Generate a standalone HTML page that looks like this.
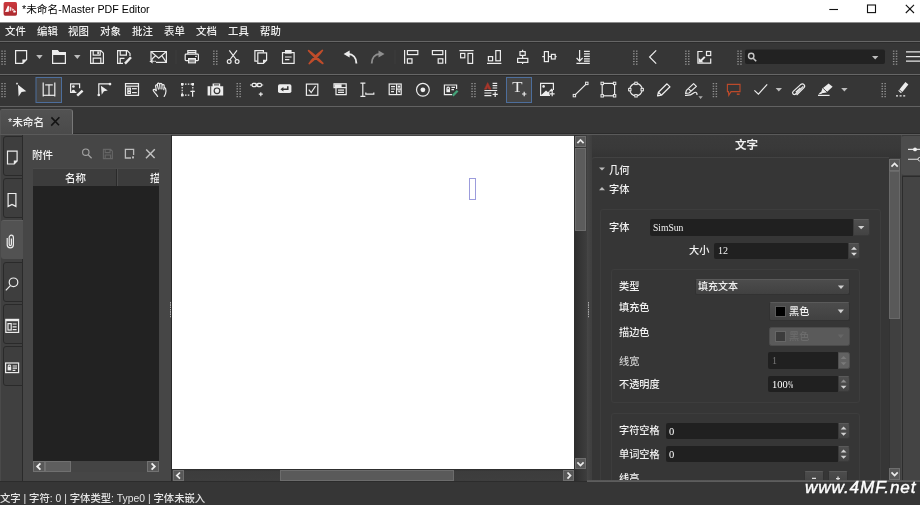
<!DOCTYPE html>
<html lang="zh-CN">
<head>
<meta charset="utf-8">
<title>*未命名-Master PDF Editor</title>
<style>
*{box-sizing:border-box;margin:0;padding:0}
html,body{width:920px;height:505px;overflow:hidden;background:#363636}
body{position:relative;font-family:"Liberation Sans","Noto Sans CJK SC",sans-serif;font-size:11px;color:#f2f2f2;font-weight:500}
.a{position:absolute}
.t{position:absolute;white-space:nowrap;line-height:14px;height:14px;will-change:transform}
svg{position:absolute;left:0;top:0;overflow:visible}
.ic{fill:none;stroke:#ececec;stroke-width:1.2}
.f{fill:#ececec;stroke:none}
.grip{position:absolute;width:5.8px;height:15.6px;background-image:radial-gradient(ellipse 0.95px 0.7px at 1.4px 1.3px,#a8a8a8 60%,transparent 100%);background-size:2.9px 2.6px}
.sbtn{position:absolute;left:3px;width:20px;height:40px;background:#3e3e3e;border:1px solid #2a2a2a;border-radius:3px 0 0 3px}
.fld{position:absolute;background:#202020;border-radius:2px}
.cmb{position:absolute;background:linear-gradient(#4c4c4c,#414141);border:1px solid #323232;border-top-color:#5a5a5a;border-radius:2.5px}
.spn{position:absolute;background:linear-gradient(#4f4f4f,#434343);border:1px solid #3a3a3a;border-top-color:#5a5a5a;border-radius:0 2.5px 2.5px 0}
.pl{font-size:10.2px}
.scb{position:absolute;background:#555;border:1px solid #333}
</style>
</head>
<body>

<div class="a" style="left:0;top:0;width:920px;height:22px;background:#fff"></div>
<div class="t" style="left:21.7px;top:1.2px;font-size:10.7px;font-weight:400;color:#000;line-height:16px;height:16px">*未命名-Master PDF Editor</div>
<div class="a" style="left:0;top:22px;width:920px;height:20px;background:#363636;border-top:1px solid #8c8c8c"></div>
<div class="t" style="left:4.6px;top:24.8px;font-size:10.4px;color:#f0f0f0">文件</div>
<div class="t" style="left:36.5px;top:24.8px;font-size:10.4px;color:#f0f0f0">编辑</div>
<div class="t" style="left:68.4px;top:24.8px;font-size:10.4px;color:#f0f0f0">视图</div>
<div class="t" style="left:100.3px;top:24.8px;font-size:10.4px;color:#f0f0f0">对象</div>
<div class="t" style="left:132.2px;top:24.8px;font-size:10.4px;color:#f0f0f0">批注</div>
<div class="t" style="left:164.1px;top:24.8px;font-size:10.4px;color:#f0f0f0">表单</div>
<div class="t" style="left:196.0px;top:24.8px;font-size:10.4px;color:#f0f0f0">文档</div>
<div class="t" style="left:227.9px;top:24.8px;font-size:10.4px;color:#f0f0f0">工具</div>
<div class="t" style="left:259.8px;top:24.8px;font-size:10.4px;color:#f0f0f0">帮助</div>
<div class="a" style="left:0;top:41px;width:920px;height:33px;background:#363636;border-top:1px solid #666;box-shadow:inset 0 1px 0 #2c2c2c"></div>
<div class="a" style="left:0;top:74px;width:920px;height:33px;background:#363636;border-top:1px solid #666;box-shadow:inset 0 1px 0 #2c2c2c;border-bottom:1px solid #626262"></div>
<div class="a" style="left:0;top:107px;width:920px;height:28px;background:#363636;border-bottom:1px solid #5a5a5a;box-shadow:inset 0 -1px 0 #2b2b2b"></div>
<div class="a" style="left:0;top:109px;width:73.4px;height:25px;background:linear-gradient(#525252,#4a4a4a);border:1px solid #5e5e5e;border-left-color:#555;border-right-color:#787878;border-bottom:none;border-radius:2px 3px 0 0"></div>
<div class="t" style="left:8px;top:115px;font-size:10.7px;color:#eee">*未命名</div>
<div class="a" style="left:0;top:135px;width:920px;height:346px;background:#464646"></div>
<div class="a" style="left:0;top:135px;width:23px;height:346px;background:#404040;border-right:1px solid #2a2a2a;border-left:1.5px solid #4a4a4a"></div>
<div class="sbtn" style="top:136px"></div>
<div class="sbtn" style="top:178px"></div>
<div class="a" style="left:1.2px;top:220px;width:21.6px;height:39.4px;background:#525252;border-top:1px solid #5e5e5e;border-radius:3px 0 0 3px"></div>
<div class="sbtn" style="top:262px"></div>
<div class="sbtn" style="top:304px"></div>
<div class="sbtn" style="top:346px"></div>
<div class="t pl" style="left:32.4px;top:148px;font-size:10.5px">附件</div>
<div class="a" style="left:33px;top:168px;width:126px;height:303.5px;background:#222"></div>
<div class="a" style="left:33px;top:168px;width:126px;height:17.5px;background:#3c3c3c;border-top:1px solid #4a4a4a"></div>
<div class="a" style="left:116px;top:169px;width:1px;height:17px;background:#2a2a2a"></div>
<div class="a" style="left:117px;top:169px;width:1px;height:17px;background:#4c4c4c"></div>
<div class="t pl" style="left:64.8px;top:170.5px;font-size:10.5px">名称</div>
<div class="a" style="left:149.6px;top:169px;width:9.4px;height:17px;overflow:hidden"><div class="t" style="left:0;top:1.5px;font-size:10.5px">描述</div></div>
<div class="a" style="left:33.3px;top:461px;width:125.7px;height:11px;background:#444"></div>
<div class="a" style="left:33.3px;top:461px;width:11.7px;height:11px;background:#585858;border:1px solid #727272"></div>
<div class="a" style="left:45.4px;top:461px;width:25.6px;height:11px;background:#5e5e5e;border:1px solid #707070"></div>
<div class="a" style="left:147px;top:461px;width:12px;height:11px;background:#585858;border:1px solid #727272"></div>
<div class="a" style="left:170px;top:302px;width:1.4px;height:16px;background-image:linear-gradient(#b0b0b0 50%,transparent 50%);background-size:1.4px 2.3px"></div>
<div class="a" style="left:172px;top:135.6px;width:402.3px;height:333.4px;background:#fff"></div>
<div class="a" style="left:170.9px;top:135px;width:1.4px;height:346px;background:#2a2a2a"></div>
<div class="a" style="left:469px;top:178px;width:7px;height:22px;border:1px solid #9c9cdc"></div>
<div class="a" style="left:574px;top:135px;width:13px;height:346px;background:linear-gradient(to right,#2d2d2d,#3e3e3e)"></div>
<div class="a" style="left:575px;top:136px;width:11px;height:11px;background:#585858;border:1px solid #6e6e6e"></div>
<div class="a" style="left:575px;top:147.5px;width:11px;height:83.5px;background:#5c5c5c;border:1px solid #6c6c6c"></div>
<div class="a" style="left:575px;top:458px;width:11px;height:11px;background:#585858;border:1px solid #6e6e6e"></div>
<div class="a" style="left:172px;top:469px;width:402px;height:12px;background:linear-gradient(#2a2a2a 0,#3c3c3c 2px,#3e3e3e)"></div>
<div class="a" style="left:173px;top:470px;width:11px;height:11px;background:#585858;border:1px solid #6e6e6e"></div>
<div class="a" style="left:280px;top:470px;width:173.5px;height:11px;background:#5a5a5a;border:1px solid #6c6c6c"></div>
<div class="a" style="left:563px;top:470px;width:11px;height:11px;background:#585858;border:1px solid #6e6e6e"></div>
<div class="a" style="left:587px;top:135px;width:5px;height:346px;background:linear-gradient(to right,#464646,#3e3e3e)"></div>
<div class="a" style="left:588px;top:302px;width:1.4px;height:16px;background-image:linear-gradient(#a8a8a8 50%,transparent 50%);background-size:1.4px 2.3px"></div>
<div class="a" style="left:592px;top:135px;width:310px;height:24px;background:linear-gradient(#3b3b3b 0,#393939 55%,#333 100%)"></div>
<div class="t" style="left:735px;top:138px;font-size:11.5px;font-weight:bold;color:#eee">文字</div>
<div class="a" style="left:591px;top:157px;width:298px;height:324px;background:#363636;border-top:1px solid #424242;border-left:1px solid #404040;border-radius:4px 0 0 0"></div>
<div class="a" style="left:888.5px;top:158px;width:12px;height:323px;background:#404040;border-left:1px solid #333"></div>
<div class="a" style="left:889px;top:158.6px;width:11.2px;height:12px;background:#585858;border:1px solid #6e6e6e"></div>
<div class="a" style="left:889px;top:171px;width:11.2px;height:148px;background:#595959;border:1px solid #696969"></div>
<div class="a" style="left:889px;top:468px;width:11.2px;height:11.6px;background:#585858;border:1px solid #6e6e6e"></div>
<div class="a" style="left:900.5px;top:135px;width:19.5px;height:346px;background:#3a3a3a;border-left:1px solid #484848"></div>
<div class="a" style="left:901px;top:135.5px;width:19px;height:39px;background:#4c4c4c;border-radius:3px 0 0 3px"></div>
<div class="a" style="left:902px;top:176px;width:18px;height:305px;background:#444;border:1.5px solid #2c2c2c;border-right:none"></div>
<div class="t pl" style="left:609.1px;top:164px">几何</div>
<div class="t pl" style="left:609.1px;top:183px">字体</div>
<div class="a" style="left:600px;top:209px;width:281px;height:280px;border:1px solid #3d3d3d;border-radius:3px"></div>
<div class="t pl" style="left:609.1px;top:220.7px">字体</div>
<div class="fld" style="left:650px;top:219px;width:204px;height:17px"></div>
<div class="t" style="left:653px;top:221px;font-family:'Liberation Serif',serif;font-size:9.6px">SimSun</div>
<div class="spn" style="left:853.4px;top:218.7px;width:17px;height:17.2px"></div>
<div class="t pl" style="left:688.6px;top:244px">大小</div>
<div class="fld" style="left:714px;top:243px;width:135px;height:16px"></div>
<div class="t" style="left:718px;top:244px;font-family:'Liberation Serif',serif;font-size:10px">12</div>
<div class="spn" style="left:848.3px;top:243px;width:11.6px;height:16.3px"></div>
<div class="a" style="left:611px;top:269px;width:249px;height:134px;border:1px solid #3d3d3d;border-radius:3px"></div>
<div class="t pl" style="left:619.4px;top:280.4px">类型</div>
<div class="cmb" style="left:695px;top:278.7px;width:154.6px;height:16.6px"></div>
<div class="t pl" style="left:698px;top:280px;font-size:10px">填充文本</div>
<div class="t pl" style="left:619.4px;top:301px">填充色</div>
<div class="cmb" style="left:769px;top:301.7px;width:80.6px;height:19.2px"></div>
<div class="a" style="left:775px;top:306px;width:11px;height:11px;background:#000;border:1px solid #5a5a5a"></div>
<div class="t pl" style="left:788.6px;top:305px">黑色</div>
<div class="t pl" style="left:619.4px;top:325.7px">描边色</div>
<div class="cmb" style="left:769px;top:326.9px;width:80.6px;height:19.3px;background:#5a5a5a;border-color:#4c4c4c"></div>
<div class="a" style="left:775px;top:331px;width:11px;height:11px;background:#3c3c3c;border:1px solid #666"></div>
<div class="t pl" style="left:788.6px;top:330px;color:#6c6c6c">黑色</div>
<div class="t pl" style="left:619.4px;top:354.8px;color:#ccc">线宽</div>
<div class="fld" style="left:768px;top:352px;width:71px;height:17px"></div>
<div class="t" style="left:772px;top:354px;font-size:10px;color:#777;font-family:'Liberation Serif',serif">1</div>
<div class="spn" style="left:838px;top:352px;width:12px;height:17px;background:#626262;border-color:#505050"></div>
<div class="t pl" style="left:619.4px;top:378.4px">不透明度</div>
<div class="fld" style="left:768px;top:376px;width:71px;height:16px"></div>
<div class="t" style="left:772.3px;top:378.2px;font-family:'Liberation Serif',serif;font-size:10.5px;font-weight:400;color:#fff">100<span style="display:inline-block;transform:scaleX(0.6);transform-origin:0 50%">%</span></div>
<div class="spn" style="left:838px;top:376px;width:12px;height:16px"></div>
<div class="a" style="left:611px;top:413px;width:249px;height:80px;border:1px solid #3d3d3d;border-radius:3px"></div>
<div class="t pl" style="left:619.4px;top:424.4px">字符空格</div>
<div class="fld" style="left:666px;top:423px;width:173px;height:16px"></div>
<div class="t" style="left:669.2px;top:424.6px;font-family:'Liberation Serif',serif;font-size:10.5px;font-weight:400;color:#fff">0</div>
<div class="spn" style="left:838px;top:423px;width:12px;height:16px"></div>
<div class="t pl" style="left:619.4px;top:448px">单词空格</div>
<div class="fld" style="left:666px;top:446px;width:173px;height:16px"></div>
<div class="t" style="left:669.2px;top:448.2px;font-family:'Liberation Serif',serif;font-size:10.5px;font-weight:400;color:#fff">0</div>
<div class="spn" style="left:838px;top:446px;width:12px;height:16px"></div>
<div class="t pl" style="left:619.4px;top:472px">线高</div>
<div class="cmb" style="left:804px;top:471px;width:20px;height:16px;border-radius:2px"></div>
<div class="cmb" style="left:828px;top:471px;width:20px;height:16px;border-radius:2px"></div>

<svg width="920" height="481" viewBox="0 0 920 481" style="overflow:hidden">
<rect x="1.3" y="50.6" width="1.5" height="1.1" fill="#9a9a9a"/><rect x="1.3" y="53.2" width="1.5" height="1.1" fill="#9a9a9a"/><rect x="1.3" y="55.8" width="1.5" height="1.1" fill="#9a9a9a"/><rect x="1.3" y="58.4" width="1.5" height="1.1" fill="#9a9a9a"/><rect x="1.3" y="61.0" width="1.5" height="1.1" fill="#9a9a9a"/><rect x="1.3" y="63.6" width="1.5" height="1.1" fill="#9a9a9a"/><rect x="4.2" y="50.6" width="1.5" height="1.1" fill="#9a9a9a"/><rect x="4.2" y="53.2" width="1.5" height="1.1" fill="#9a9a9a"/><rect x="4.2" y="55.8" width="1.5" height="1.1" fill="#9a9a9a"/><rect x="4.2" y="58.4" width="1.5" height="1.1" fill="#9a9a9a"/><rect x="4.2" y="61.0" width="1.5" height="1.1" fill="#9a9a9a"/><rect x="4.2" y="63.6" width="1.5" height="1.1" fill="#9a9a9a"/><rect x="213.1" y="50.6" width="1.5" height="1.1" fill="#9a9a9a"/><rect x="213.1" y="53.2" width="1.5" height="1.1" fill="#9a9a9a"/><rect x="213.1" y="55.8" width="1.5" height="1.1" fill="#9a9a9a"/><rect x="213.1" y="58.4" width="1.5" height="1.1" fill="#9a9a9a"/><rect x="213.1" y="61.0" width="1.5" height="1.1" fill="#9a9a9a"/><rect x="213.1" y="63.6" width="1.5" height="1.1" fill="#9a9a9a"/><rect x="216.0" y="50.6" width="1.5" height="1.1" fill="#9a9a9a"/><rect x="216.0" y="53.2" width="1.5" height="1.1" fill="#9a9a9a"/><rect x="216.0" y="55.8" width="1.5" height="1.1" fill="#9a9a9a"/><rect x="216.0" y="58.4" width="1.5" height="1.1" fill="#9a9a9a"/><rect x="216.0" y="61.0" width="1.5" height="1.1" fill="#9a9a9a"/><rect x="216.0" y="63.6" width="1.5" height="1.1" fill="#9a9a9a"/><rect x="633.1" y="50.6" width="1.5" height="1.1" fill="#9a9a9a"/><rect x="633.1" y="53.2" width="1.5" height="1.1" fill="#9a9a9a"/><rect x="633.1" y="55.8" width="1.5" height="1.1" fill="#9a9a9a"/><rect x="633.1" y="58.4" width="1.5" height="1.1" fill="#9a9a9a"/><rect x="633.1" y="61.0" width="1.5" height="1.1" fill="#9a9a9a"/><rect x="633.1" y="63.6" width="1.5" height="1.1" fill="#9a9a9a"/><rect x="636.0" y="50.6" width="1.5" height="1.1" fill="#9a9a9a"/><rect x="636.0" y="53.2" width="1.5" height="1.1" fill="#9a9a9a"/><rect x="636.0" y="55.8" width="1.5" height="1.1" fill="#9a9a9a"/><rect x="636.0" y="58.4" width="1.5" height="1.1" fill="#9a9a9a"/><rect x="636.0" y="61.0" width="1.5" height="1.1" fill="#9a9a9a"/><rect x="636.0" y="63.6" width="1.5" height="1.1" fill="#9a9a9a"/><rect x="685.1" y="50.6" width="1.5" height="1.1" fill="#9a9a9a"/><rect x="685.1" y="53.2" width="1.5" height="1.1" fill="#9a9a9a"/><rect x="685.1" y="55.8" width="1.5" height="1.1" fill="#9a9a9a"/><rect x="685.1" y="58.4" width="1.5" height="1.1" fill="#9a9a9a"/><rect x="685.1" y="61.0" width="1.5" height="1.1" fill="#9a9a9a"/><rect x="685.1" y="63.6" width="1.5" height="1.1" fill="#9a9a9a"/><rect x="688.0" y="50.6" width="1.5" height="1.1" fill="#9a9a9a"/><rect x="688.0" y="53.2" width="1.5" height="1.1" fill="#9a9a9a"/><rect x="688.0" y="55.8" width="1.5" height="1.1" fill="#9a9a9a"/><rect x="688.0" y="58.4" width="1.5" height="1.1" fill="#9a9a9a"/><rect x="688.0" y="61.0" width="1.5" height="1.1" fill="#9a9a9a"/><rect x="688.0" y="63.6" width="1.5" height="1.1" fill="#9a9a9a"/><rect x="737.3" y="50.6" width="1.5" height="1.1" fill="#9a9a9a"/><rect x="737.3" y="53.2" width="1.5" height="1.1" fill="#9a9a9a"/><rect x="737.3" y="55.8" width="1.5" height="1.1" fill="#9a9a9a"/><rect x="737.3" y="58.4" width="1.5" height="1.1" fill="#9a9a9a"/><rect x="737.3" y="61.0" width="1.5" height="1.1" fill="#9a9a9a"/><rect x="737.3" y="63.6" width="1.5" height="1.1" fill="#9a9a9a"/><rect x="740.2" y="50.6" width="1.5" height="1.1" fill="#9a9a9a"/><rect x="740.2" y="53.2" width="1.5" height="1.1" fill="#9a9a9a"/><rect x="740.2" y="55.8" width="1.5" height="1.1" fill="#9a9a9a"/><rect x="740.2" y="58.4" width="1.5" height="1.1" fill="#9a9a9a"/><rect x="740.2" y="61.0" width="1.5" height="1.1" fill="#9a9a9a"/><rect x="740.2" y="63.6" width="1.5" height="1.1" fill="#9a9a9a"/><rect x="892.9" y="50.6" width="1.5" height="1.1" fill="#9a9a9a"/><rect x="892.9" y="53.2" width="1.5" height="1.1" fill="#9a9a9a"/><rect x="892.9" y="55.8" width="1.5" height="1.1" fill="#9a9a9a"/><rect x="892.9" y="58.4" width="1.5" height="1.1" fill="#9a9a9a"/><rect x="892.9" y="61.0" width="1.5" height="1.1" fill="#9a9a9a"/><rect x="892.9" y="63.6" width="1.5" height="1.1" fill="#9a9a9a"/><rect x="895.8" y="50.6" width="1.5" height="1.1" fill="#9a9a9a"/><rect x="895.8" y="53.2" width="1.5" height="1.1" fill="#9a9a9a"/><rect x="895.8" y="55.8" width="1.5" height="1.1" fill="#9a9a9a"/><rect x="895.8" y="58.4" width="1.5" height="1.1" fill="#9a9a9a"/><rect x="895.8" y="61.0" width="1.5" height="1.1" fill="#9a9a9a"/><rect x="895.8" y="63.6" width="1.5" height="1.1" fill="#9a9a9a"/><rect x="1.3" y="83.1" width="1.5" height="1.1" fill="#9a9a9a"/><rect x="1.3" y="85.7" width="1.5" height="1.1" fill="#9a9a9a"/><rect x="1.3" y="88.3" width="1.5" height="1.1" fill="#9a9a9a"/><rect x="1.3" y="90.9" width="1.5" height="1.1" fill="#9a9a9a"/><rect x="1.3" y="93.5" width="1.5" height="1.1" fill="#9a9a9a"/><rect x="1.3" y="96.1" width="1.5" height="1.1" fill="#9a9a9a"/><rect x="4.2" y="83.1" width="1.5" height="1.1" fill="#9a9a9a"/><rect x="4.2" y="85.7" width="1.5" height="1.1" fill="#9a9a9a"/><rect x="4.2" y="88.3" width="1.5" height="1.1" fill="#9a9a9a"/><rect x="4.2" y="90.9" width="1.5" height="1.1" fill="#9a9a9a"/><rect x="4.2" y="93.5" width="1.5" height="1.1" fill="#9a9a9a"/><rect x="4.2" y="96.1" width="1.5" height="1.1" fill="#9a9a9a"/><rect x="236.5" y="83.1" width="1.5" height="1.1" fill="#9a9a9a"/><rect x="236.5" y="85.7" width="1.5" height="1.1" fill="#9a9a9a"/><rect x="236.5" y="88.3" width="1.5" height="1.1" fill="#9a9a9a"/><rect x="236.5" y="90.9" width="1.5" height="1.1" fill="#9a9a9a"/><rect x="236.5" y="93.5" width="1.5" height="1.1" fill="#9a9a9a"/><rect x="236.5" y="96.1" width="1.5" height="1.1" fill="#9a9a9a"/><rect x="239.4" y="83.1" width="1.5" height="1.1" fill="#9a9a9a"/><rect x="239.4" y="85.7" width="1.5" height="1.1" fill="#9a9a9a"/><rect x="239.4" y="88.3" width="1.5" height="1.1" fill="#9a9a9a"/><rect x="239.4" y="90.9" width="1.5" height="1.1" fill="#9a9a9a"/><rect x="239.4" y="93.5" width="1.5" height="1.1" fill="#9a9a9a"/><rect x="239.4" y="96.1" width="1.5" height="1.1" fill="#9a9a9a"/><rect x="471.3" y="83.1" width="1.5" height="1.1" fill="#9a9a9a"/><rect x="471.3" y="85.7" width="1.5" height="1.1" fill="#9a9a9a"/><rect x="471.3" y="88.3" width="1.5" height="1.1" fill="#9a9a9a"/><rect x="471.3" y="90.9" width="1.5" height="1.1" fill="#9a9a9a"/><rect x="471.3" y="93.5" width="1.5" height="1.1" fill="#9a9a9a"/><rect x="471.3" y="96.1" width="1.5" height="1.1" fill="#9a9a9a"/><rect x="474.2" y="83.1" width="1.5" height="1.1" fill="#9a9a9a"/><rect x="474.2" y="85.7" width="1.5" height="1.1" fill="#9a9a9a"/><rect x="474.2" y="88.3" width="1.5" height="1.1" fill="#9a9a9a"/><rect x="474.2" y="90.9" width="1.5" height="1.1" fill="#9a9a9a"/><rect x="474.2" y="93.5" width="1.5" height="1.1" fill="#9a9a9a"/><rect x="474.2" y="96.1" width="1.5" height="1.1" fill="#9a9a9a"/><rect x="712.7" y="83.1" width="1.5" height="1.1" fill="#9a9a9a"/><rect x="712.7" y="85.7" width="1.5" height="1.1" fill="#9a9a9a"/><rect x="712.7" y="88.3" width="1.5" height="1.1" fill="#9a9a9a"/><rect x="712.7" y="90.9" width="1.5" height="1.1" fill="#9a9a9a"/><rect x="712.7" y="93.5" width="1.5" height="1.1" fill="#9a9a9a"/><rect x="712.7" y="96.1" width="1.5" height="1.1" fill="#9a9a9a"/><rect x="715.6" y="83.1" width="1.5" height="1.1" fill="#9a9a9a"/><rect x="715.6" y="85.7" width="1.5" height="1.1" fill="#9a9a9a"/><rect x="715.6" y="88.3" width="1.5" height="1.1" fill="#9a9a9a"/><rect x="715.6" y="90.9" width="1.5" height="1.1" fill="#9a9a9a"/><rect x="715.6" y="93.5" width="1.5" height="1.1" fill="#9a9a9a"/><rect x="715.6" y="96.1" width="1.5" height="1.1" fill="#9a9a9a"/><rect x="881.5" y="83.1" width="1.5" height="1.1" fill="#9a9a9a"/><rect x="881.5" y="85.7" width="1.5" height="1.1" fill="#9a9a9a"/><rect x="881.5" y="88.3" width="1.5" height="1.1" fill="#9a9a9a"/><rect x="881.5" y="90.9" width="1.5" height="1.1" fill="#9a9a9a"/><rect x="881.5" y="93.5" width="1.5" height="1.1" fill="#9a9a9a"/><rect x="881.5" y="96.1" width="1.5" height="1.1" fill="#9a9a9a"/><rect x="884.4" y="83.1" width="1.5" height="1.1" fill="#9a9a9a"/><rect x="884.4" y="85.7" width="1.5" height="1.1" fill="#9a9a9a"/><rect x="884.4" y="88.3" width="1.5" height="1.1" fill="#9a9a9a"/><rect x="884.4" y="90.9" width="1.5" height="1.1" fill="#9a9a9a"/><rect x="884.4" y="93.5" width="1.5" height="1.1" fill="#9a9a9a"/><rect x="884.4" y="96.1" width="1.5" height="1.1" fill="#9a9a9a"/><path class="ic" d="M15.6 50.6 H26.6 V59.6 L22.8 63.4 H15.6 Z" stroke-width="1.3"/><path class="f" d="M22.4 63.8 V59.4 H26.8 Z"/>
<path d="M36.2 55.1 h6.5 l-3.2 3.8 z" fill="#bdbdbd"/>
<path class="ic" d="M52.6 63.4 V50.6 H57.5 L59 52.6 H65.4 V63.4 Z"/><path class="f" d="M52.6 50.4 H57.6 L59.2 52.6 H65.4 V55 H52.6 Z"/>
<path d="M74.0 55.1 h6.5 l-3.2 3.8 z" fill="#bdbdbd"/>
<path class="ic" d="M90.6 50.6 H100.8 L103.4 53.2 V63.4 H90.6 Z"/><path class="ic" d="M93.2 50.6 V55.2 H100.2 V50.6 M93.2 63.4 V58.2 H100.8 V63.4"/><rect class="f" x="97.3" y="51.4" width="1.6" height="2.8"/>
<path class="ic" d="M123 63.4 H117.6 V50.6 H127.2 L130 53.4 V56"/><path class="ic" d="M120.2 50.6 V55.2 H126.4 V50.6 M120.2 63.4 V58.4 H124.5"/><path d="M125 63.6 L131 57.2" stroke="#ececec" stroke-width="2.4" fill="none"/>
<path class="ic" d="M151 60 V51.5 H166.4 V62.4 H156"/><path class="ic" d="M151.2 51.7 L158.7 58.3 L166.2 51.7 M155.5 55.8 L151.5 59.5 M162 55.8 L166.2 62.2" stroke-width="1"/><path class="f" d="M149.4 61.3 L152.6 59 V63.6 Z"/><path class="ic" d="M152.5 61.3 H156" stroke-dasharray="1.2 0.8"/>
<path class="ic" d="M187.8 54 V50.5 H195.8 V54 M187.8 52.3 H195.8" stroke-width="1.1"/><rect x="185.2" y="54.2" width="13.2" height="6.4" rx="0.8" fill="#2c2c2c" stroke="#ececec" stroke-width="1.2"/><rect class="f" x="195.2" y="55.8" width="1.6" height="1.2"/><rect x="188" y="58" width="8" height="5.4" fill="#ececec"/><path d="M189.2 60.2 H194.8 M189.2 61.8 H194.8" stroke="#363636" stroke-width="0.8"/>
<path class="ic" d="M229.3 50.4 L236.6 60 M237 50.4 L229.7 60" stroke-width="1.3"/><circle class="ic" cx="229.2" cy="61.6" r="1.9"/><circle class="ic" cx="237.1" cy="61.6" r="1.9"/>
<path class="ic" d="M257.4 61.2 H254.9 V50.6 H263.4 V52.4"/><path d="M257.8 52.8 H266.6 V60.2 L263.4 63.4 H257.8 Z" fill="#363636" stroke="#ececec" stroke-width="1.2"/><path class="f" d="M263 63.6 V59.8 H266.8 Z"/>
<rect class="ic" x="282.5" y="52.6" width="11.6" height="10.8"/><rect class="f" x="285" y="50" width="6.6" height="3.6"/><path class="ic" d="M285 57 H291.6 M285 59.6 H289.4" stroke-width="1.3"/>
<path d="M308.6 50.6 Q314.6 54.4 322.8 63.4 Q316.4 59.6 308.6 50.6 Z M322.4 50.4 Q318.4 56.6 309.2 63.6 Q313.6 57 322.4 50.4 Z" fill="#c04c2a" stroke="#c04c2a" stroke-width="1.7" stroke-linejoin="round"/>
<path d="M348 54 C353 54 356.4 57.5 356.4 63.6" fill="none" stroke="#ececec" stroke-width="1.9"/><path class="f" d="M343.6 54 L349.6 50.6 V57.4 Z"/>
<path d="M380 54 C375 54 371.7 57.5 371.7 63.6" fill="none" stroke="#8e8e8e" stroke-width="1.9"/><path d="M384.5 54 L378.5 50.6 V57.4 Z" fill="#8e8e8e"/>
<path class="ic" d="M404.6 50 V63.8"/><rect class="ic" x="407.4" y="50.6" width="10.4" height="4"/><rect class="ic" x="407.4" y="58.8" width="4.6" height="4.4"/>
<path class="ic" d="M445.6 50 V63.8"/><rect class="ic" x="432.4" y="50.6" width="10.4" height="4"/><rect class="ic" x="438.2" y="58.8" width="4.6" height="4.4"/>
<path class="ic" d="M459.4 50.6 H473.6"/><rect class="ic" x="460.6" y="53.4" width="4.2" height="4.4"/><rect class="ic" x="468" y="53.4" width="4.6" height="10"/>
<path class="ic" d="M487 63.4 H501.4"/><rect class="ic" x="488.4" y="56.6" width="4.2" height="4.2"/><rect class="ic" x="495.8" y="50.6" width="4.6" height="10.2"/>
<path class="ic" d="M522.6 49.8 V64"/><rect x="520" y="51.6" width="5.2" height="3.8" fill="#363636" stroke="#ececec" stroke-width="1.2"/><rect x="517.6" y="58.4" width="10.2" height="4" fill="#363636" stroke="#ececec" stroke-width="1.2"/>
<path class="ic" d="M542.2 56.6 H556.6"/><rect x="544.4" y="51.6" width="4" height="10" fill="#363636" stroke="#ececec" stroke-width="1.2"/><rect x="551.4" y="54.4" width="3.8" height="4.6" fill="#363636" stroke="#ececec" stroke-width="1.2"/>
<path class="ic" d="M579.6 50 V61 M576.6 58 L579.6 61.2 L582.6 58 M576.4 63.4 H589.8" /><path class="ic" d="M584 51.4 H589.8 M584 53.9 H589.8 M584 56.4 H589.8 M584 58.9 H589.8 M584 61.2 H589.8" stroke-width="1.1"/>
<path class="ic" d="M656.2 50.4 L649.6 57 L656.2 63.6" stroke-width="1.2"/>
<path class="ic" d="M702.6 51.5 H697.9 V63.2 H710.7 V58.6" stroke-width="1.5"/><rect class="ic" x="706.5" y="51.5" width="4.2" height="4" stroke-width="1.4"/><path d="M704.8 56.8 L700.6 61" stroke="#ececec" stroke-width="1.9"/><path class="f" d="M698.6 57.8 V62.6 H703.6 Z"/>
<rect x="745" y="49.6" width="140" height="14.4" rx="2" fill="#222"/>
<circle cx="751.2" cy="56" r="2.7" fill="none" stroke="#c8c8c8" stroke-width="1.4"/><path d="M753.2 58.2 L756.2 61.2" stroke="#c8c8c8" stroke-width="1.6"/>
<path d="M872.0 56.0 h6.4 l-3.2 3.6 z" fill="#bdbdbd"/>
<path d="M906 51.8 H920 M906 56.6 H920 M906 61.2 H920" stroke="#e6e6e6" stroke-width="1.3"/>
<path d="M176 50 V64 M395 50 V64" stroke="#3c3c3c" stroke-width="1"/>
<rect x="36" y="77.5" width="25.5" height="25" fill="#454545" stroke="#4d6e9c" stroke-width="1"/>
<rect x="506.5" y="77.5" width="25" height="25" fill="#454545" stroke="#4d6e9c" stroke-width="1"/>
<path class="f" d="M18 84.8 L26.3 91.2 L21.6 92 L18.6 96.4 Z"/><rect class="f" x="16.2" y="82.8" width="1.6" height="1.6"/>
<path class="ic" d="M43.2 82.6 V96.6 M54.8 82.6 V96.6" stroke-width="1.2"/><path class="ic" d="M45.2 84.9 H52.8" stroke-width="1.9"/><path class="ic" d="M43 95.3 H55" stroke-width="1.6"/><path class="ic" d="M49 84.8 V95.4" stroke-width="2.2"/>
<path class="ic" d="M76.4 92.4 H70.6 V83.8 H79.6 V88.2" stroke-width="1.5"/><circle class="f" cx="73.4" cy="86.5" r="1.35"/><path class="f" d="M71.6 92 C71.6 89 75.2 89 75.2 92 Z"/><path d="M77.2 95.6 L82.6 90.6" stroke="#ececec" stroke-width="2.5" fill="none"/>
<path class="ic" d="M98.8 94.8 V83.9 H110" stroke-width="1.4"/><circle class="f" cx="110" cy="84.1" r="1.35"/><circle class="f" cx="98.8" cy="95" r="1.35"/><path class="f" d="M100.9 85.8 L107.8 90.4 L104 91.3 L101.7 94.8 Z"/>
<rect class="ic" x="125.5" y="83.6" width="13" height="11.8" stroke-width="1.3"/><path class="ic" d="M125.5 86.2 H138.5" stroke-width="1"/><rect class="ic" x="127.8" y="88.2" width="2.6" height="2" stroke-width="0.9"/><rect class="ic" x="127.8" y="91.5" width="2.6" height="2" stroke-width="0.9"/><path class="ic" d="M132 88.7 H136.8" stroke-width="1.2"/><path class="ic" d="M132 92.6 H136.8" stroke-width="1.7"/>
<path class="ic" d="M157.6 96.4 C156.6 94.2 153.6 92.2 153.2 90.4 C153.2 88.8 155.2 89 156.4 91.2 L155.6 86.2 C155.4 84.6 157.2 84.2 157.6 85.8 L158.4 89.2 M157.6 85.8 L157.4 84.4 C157.4 82.8 159.4 82.6 159.6 84.2 L160 88.8 M159.7 84.6 C159.9 83 161.9 83 162 84.6 L161.9 89 M162 85.6 C162.4 84.2 164.2 84.4 164.2 86 L163.8 89.6 M164.2 87 C166.8 88.4 166.4 93 164.2 96.4" stroke-width="1.05" stroke-linecap="round"/>
<path class="ic" d="M182.2 84.2 H193 M182.2 84.2 V95.4 M182.2 95.2 H189.4 M192.8 84.2 V90.4" stroke-dasharray="1.5 1.3" stroke-width="1" stroke="#d0d0d0"/><rect x="181.5" y="83.5" width="1.4" height="1.4" fill="#ececec" stroke="#ececec" stroke-width="1"/><rect x="192.1" y="83.5" width="1.4" height="1.4" fill="#ececec" stroke="#ececec" stroke-width="1"/><rect x="181.5" y="94.5" width="1.4" height="1.4" fill="#ececec" stroke="#ececec" stroke-width="1"/><path class="ic" d="M190.4 91.3 H194.8 M192.6 91.3 V96.8" stroke-width="1.2"/>
<path class="f" d="M207.6 86.2 H223.2 V95.6 H207.6 Z M212.6 83.4 H220.2 V86.4 H212.6 Z"/><rect x="210.2" y="86.2" width="1" height="9.4" fill="#363636"/><circle cx="217" cy="90.8" r="3.4" fill="#363636"/><circle cx="217" cy="90.8" r="2.2" fill="#ececec"/><rect x="214" y="84.4" width="5" height="1" fill="#363636"/>
<rect class="ic" x="252.2" y="83.4" width="4.2" height="3.2" rx="1" stroke-width="1.1"/><rect class="ic" x="257.2" y="83.4" width="4.2" height="3.2" rx="1" stroke-width="1.1"/><path class="ic" d="M250 85 H252 M255 85 H258.6 M261.4 85 H263.2" stroke-width="1.1"/><path class="ic" d="M258.8 94.2 H262.8 M260.8 92.2 V96.2" stroke-width="1.1"/>
<rect class="f" x="278" y="84.3" width="13.4" height="8.8" rx="1.8"/><path d="M287.8 86.2 V89.2 H282.6" fill="none" stroke="#363636" stroke-width="1.5"/><path d="M280.4 89.2 L283.4 87 V91.4 Z" fill="#363636"/>
<rect class="ic" x="306.4" y="84.1" width="11.4" height="11.2" stroke-width="1.05"/><path class="ic" d="M308.8 89.6 L311.2 92.6 L315.6 86" stroke-width="2"/>
<rect class="ic" x="334" y="83.8" width="12.2" height="3.8"/><rect class="f" x="334.6" y="84.2" width="7" height="3"/><path class="ic" d="M336 87.6 V94.6 H346.2 V87.6 M338 90.2 H344 M338 92.4 H344" stroke-width="1.2"/>
<path class="ic" d="M362.8 83.2 V96.4 M360.4 83.2 H365.4 M360.4 96.4 H365.4 M365.8 92.6 V94.2 H373.8 V92.6" stroke-width="1.15"/>
<rect class="ic" x="389.2" y="84" width="12" height="10.6"/><path class="ic" d="M396.6 84 V94.6 M396.6 89.2 H401" stroke-width="1.1"/><path class="ic" d="M391 86.6 H395 M391 89 H395 M391 91.6 H394" stroke-width="1"/><rect class="f" x="397.8" y="85.6" width="2.4" height="2"/><path class="f" d="M397.6 90.6 H400.6 L399.1 93 Z"/>
<circle class="ic" cx="422.9" cy="89.8" r="6.4" stroke-width="1.3"/><circle class="f" cx="422.9" cy="89.8" r="2.4"/>
<path class="ic" d="M452 94.6 H444.4 V85 H456.6 V89"/><rect class="f" x="446.4" y="89.2" width="3.6" height="3"/><path class="ic" d="M447 89.4 V88 C447 86.8 449.4 86.8 449.4 88 V89.4" stroke-width="0.9"/><path class="ic" d="M451.4 87.4 H455 M451.4 89.6 H454" stroke-width="1"/><path d="M452.8 95.6 L457.6 90.8" stroke="#45a37a" stroke-width="2.3" fill="none"/>
<path d="M484.4 89.2 L487.7 82.6 L491 89.2 H488.9 L487.7 86.6 L486.5 89.2 Z M486 88 H489.4" fill="#a8362b" stroke="#a8362b" stroke-width="0.5"/><path class="ic" d="M492.6 83.4 H497.2 M492.6 85.7 H497.2 M492.6 88 H497.2 M484.4 90.5 H497.2 M484.4 93 H491.4 M484.4 95.6 H491.4" stroke-width="1"/><path class="ic" d="M492.6 94.4 H497.8 M495.2 91.8 V97" stroke-width="1.2"/>
<text transform="translate(512.3 92.1) scale(1.18 1)" font-family="Liberation Serif,serif" font-size="14.2" fill="#ececec">T</text><path class="ic" d="M522 94 H526.4 M524.2 91.8 V96.2" stroke-width="1.2"/>
<path class="ic" d="M553.4 90 V83.4 H540.6 V95.4 H550"/><circle class="f" cx="543.6" cy="86.4" r="1.3"/><path class="f" d="M541 95.2 L546 90.4 L548 92.2 L551.6 88.6 L553 90 V91.4 H549.4 V95.2 Z"/><path class="ic" d="M549.8 93.8 H554.6 M552.2 91.4 V96.2" stroke-width="1.2"/>
<path class="ic" d="M574.6 95.4 L586.6 83.6" stroke-width="1.2"/><rect x="573.2" y="94.4" width="2.4" height="2.4" fill="#363636" stroke="#ececec" stroke-width="1"/><rect x="585.6" y="82.2" width="2.4" height="2.4" fill="#363636" stroke="#ececec" stroke-width="1"/>
<rect class="ic" x="602.2" y="83.4" width="12.4" height="12.4" stroke-width="1.3"/><rect x="601.0" y="82.2" width="2.4" height="2.4" fill="#363636" stroke="#ececec" stroke-width="1"/><rect x="613.4" y="82.2" width="2.4" height="2.4" fill="#363636" stroke="#ececec" stroke-width="1"/><rect x="601.0" y="94.6" width="2.4" height="2.4" fill="#363636" stroke="#ececec" stroke-width="1"/><rect x="613.4" y="94.6" width="2.4" height="2.4" fill="#363636" stroke="#ececec" stroke-width="1"/>
<circle class="ic" cx="636" cy="89.6" r="6.2" stroke-width="1.3"/><rect x="634.8" y="82.2" width="2.4" height="2.4" fill="#363636" stroke="#ececec" stroke-width="1"/><rect x="634.8" y="94.6" width="2.4" height="2.4" fill="#363636" stroke="#ececec" stroke-width="1"/><rect x="628.6" y="88.4" width="2.4" height="2.4" fill="#363636" stroke="#ececec" stroke-width="1"/><rect x="641.0" y="88.4" width="2.4" height="2.4" fill="#363636" stroke="#ececec" stroke-width="1"/>
<path class="ic" d="M657.6 95.8 L658.4 92.2 L667 83.8 L670 86.8 L661.4 95.2 Z M658.4 92.2 L661.4 95.2" stroke-width="1.1" stroke-linejoin="round"/>
<path class="ic" d="M685.6 93.4 L686.4 90.4 L693.6 83.6 L696.4 86.4 L689 93 Z M688.4 88.6 L691 91.2" stroke-width="1.1" stroke-linejoin="round"/><path class="ic" d="M685 95.4 C690 95.8 692 94.6 693.6 93 C695.4 91.4 697.4 92.6 697 95" stroke-width="1.1"/><path d="M698.4 96.3 h4.4 l-2.2 2.6 z" fill="#aaa"/>
<path d="M727.4 84.4 H740 V91.6 H731 L728.8 95.2 L728.4 91.6 H727.4 Z" fill="none" stroke="#bb4a2b" stroke-width="1.15"/><path d="M736.8 94.2 H739.6" stroke="#bb4a2b" stroke-width="1.5"/>
<path class="ic" d="M754.4 90.4 L758.4 94.2 L767.2 84.4" stroke-width="1.3"/>
<path d="M775.6 88.0 h6.4 l-3.2 3.4 z" fill="#bdbdbd"/>
<path class="ic" d="M803.2 86.4 L795.6 94 C794 95.6 791.4 93.2 793.2 91.4 L800.6 84.6 C803.2 82.6 806 85.6 803.8 87.8 L796.6 95 " stroke-width="1.1"/><path class="ic" d="M800.4 88 L795.8 92.2" stroke-width="1"/>
<path class="f" d="M820.6 93.6 L822.4 88.6 L828.6 83.6 L832.6 86.8 L826.4 92.6 Z"/><path d="M823.2 88.4 L827 92" stroke="#363636" stroke-width="0.9"/><path class="ic" d="M818 95.4 H829.6" stroke-width="1.2"/><path class="f" d="M818.4 94.6 L820.4 92 L822 93.8 Z"/>
<path d="M841.2 88.0 h6.4 l-3.2 3.4 z" fill="#bdbdbd"/>
<path class="f" d="M899.4 89.4 L905.4 82 L908.4 84.6 L902.4 92 Z"/><path class="ic" d="M898.6 90.4 L901.4 92.8" stroke-width="1.6"/><path class="ic" d="M896 95.8 H898 M899.6 95.8 H901.6 M903.2 95.8 H905.2" stroke-width="1.5"/>
<defs><linearGradient id="agr" x1="0" y1="0" x2="0" y2="1"><stop offset="0" stop-color="#cc393e"/><stop offset="1" stop-color="#ac2a2f"/></linearGradient></defs><rect x="3.6" y="2.1" width="13.4" height="13.6" rx="1.6" fill="url(#agr)"/>
<path d="M5 12 L8 5.4 L9 6.4 L8.8 11.8 Z" fill="#fff"/><path d="M9.6 6.4 L11.6 7.8 L10.6 11.2 L9.6 10.8 Z" fill="#f6dcdc"/><path d="M11.8 8.2 L14.4 9.4 L13.2 10.8 L11.6 10.4 Z" fill="#f3cfd0"/><path d="M13.2 11 L14.6 10.2 L16 11.4 L15.4 12.6 L13.4 12.4 Z" fill="#fff"/>
<path d="M829.3 9.5 H838" stroke="#111" stroke-width="1.1"/>
<rect x="867.5" y="5" width="8" height="7.6" fill="none" stroke="#111" stroke-width="1.1"/>
<path d="M905.8 4.8 L914 13 M914 4.8 L905.8 13" stroke="#111" stroke-width="1.1"/>
<path d="M51.4 117.4 L59 125.2 M59.4 117.2 L51.2 125.6" stroke="#141414" stroke-width="1.6"/>
<path class="ic" d="M7.5 151.2 H17.1 V161 L14.2 164 H7.5 Z" stroke-width="1.3"/><path class="f" d="M13.8 164.4 V160.6 H17.4 Z"/>
<path class="ic" d="M8.1 193.5 H15.9 V206.4 L12 204.4 L8.1 206.4 Z" stroke-width="1.15"/>
<path class="ic" d="M7.2 238 V244.8 C7.2 248.8 13.4 248.8 13.4 244.8 V237.6 C13.4 234.4 9.2 234.4 9.2 237.6 V244.2 C9.2 246 11.4 246 11.4 244.2 V238.6" stroke="#c4c4c4" stroke-width="1.1"/>
<circle class="ic" cx="13.5" cy="282.3" r="4.3" stroke-width="1.1"/><path class="ic" d="M10.4 285.6 L5.8 290.4" stroke-width="1.4"/>
<rect class="ic" x="5.8" y="319.4" width="12.8" height="13" stroke-width="1.3"/><path class="ic" d="M5.8 320.6 H18.6" stroke-width="2"/><rect class="ic" x="8" y="323.6" width="3.2" height="6.4" stroke-width="1"/><path class="ic" d="M12.6 324 H16.6 M12.6 326.8 H16.6 M12.6 329.6 H16.6" stroke-width="1.2"/>
<rect class="ic" x="5.6" y="363" width="13" height="9.6" stroke-width="1.3"/><rect class="f" x="7.6" y="366.8" width="3.6" height="3.6"/><path class="ic" d="M8.3 366.8 V365.8 C8.3 364.8 10.5 364.8 10.5 365.8 V366.8" stroke-width="0.8"/><path class="ic" d="M12.6 366 H17 M12.6 368.2 H17" stroke-width="1.3"/><path class="ic" d="M12.6 370.4 H15.4" stroke-width="1"/>
<circle cx="85.8" cy="152.2" r="3.2" fill="none" stroke="#a4a4a4" stroke-width="1.1"/><path d="M88 154.6 L91.6 158.2" stroke="#a4a4a4" stroke-width="1.3"/>
<path d="M103.4 149.4 H110.6 L112.4 151.2 V158.6 H103.4 Z M105.2 149.4 V152.6 H110 V149.4 M105.2 158.6 V155 H110.6 V158.6" fill="none" stroke="#666" stroke-width="1.1"/>
<path d="M133.6 155 V149.4 H125.4 V158 H131" fill="none" stroke="#bcbcbc" stroke-width="1.3"/><rect x="132" y="156.4" width="2" height="2" fill="#bcbcbc"/>
<path d="M146.2 149.4 L154.6 158 M154.8 149.2 L146 158.2" stroke="#c0c0c0" stroke-width="1.5"/>
<path d="M40.4 463.3 L37.2 466.5 L40.4 469.7" fill="none" stroke="#f0f0f0" stroke-width="1.8"/>
<path d="M151.6 463.3 L154.8 466.5 L151.6 469.7" fill="none" stroke="#f0f0f0" stroke-width="1.8"/>
<path d="M577.4 143.1 L580.5 139.9 L583.6 143.1" fill="none" stroke="#ececec" stroke-width="1.7"/>
<path d="M577.4 462.4 L580.5 465.6 L583.6 462.4" fill="none" stroke="#ececec" stroke-width="1.7"/>
<path d="M180.0 472.5 L176.8 475.6 L180.0 478.7" fill="none" stroke="#ececec" stroke-width="1.7"/>
<path d="M567.5 472.5 L570.5 475.6 L567.5 478.7" fill="none" stroke="#ececec" stroke-width="1.7"/>
<path d="M891.5 166.6 L894.6 163.4 L897.7 166.6" fill="none" stroke="#ececec" stroke-width="1.7"/>
<path d="M891.5 472.4 L894.6 475.6 L897.7 472.4" fill="none" stroke="#ececec" stroke-width="1.7"/>
<path d="M599.0 167.4 h6.0 l-3.0 3.2 z" fill="#bbb"/>
<path d="M599.0 190.2 h6.0 l-3.0 -3.2 z" fill="#bbb"/>
<path d="M858.0 225.9 h6.4 l-3.2 3.4 z" fill="#d0d0d0"/>
<path d="M837.9 285.4 h6.2 l-3.1 3.6 z" fill="#d0d0d0"/>
<path d="M837.7 309.6 h6.2 l-3.1 3.6 z" fill="#d0d0d0"/>
<path d="M837.7 334.6 h6.2 l-3.1 3.6 z" fill="#666"/>
<path d="M851.1 249.7 h5.8 l-2.9 -3.0 z" fill="#dcdcdc"/>
<path d="M851.1 252.8 h5.8 l-2.9 3.0 z" fill="#dcdcdc"/>
<path d="M840.7 359.0 h5.8 l-2.9 -3.0 z" fill="#7a7a7a"/>
<path d="M840.7 362.2 h5.8 l-2.9 3.0 z" fill="#7a7a7a"/>
<path d="M840.7 382.5 h5.8 l-2.9 -3.0 z" fill="#8c8c8c"/>
<path d="M840.7 385.7 h5.8 l-2.9 3.0 z" fill="#d0d0d0"/>
<path d="M840.7 429.5 h5.8 l-2.9 -3.0 z" fill="#d0d0d0"/>
<path d="M840.7 432.7 h5.8 l-2.9 3.0 z" fill="#d0d0d0"/>
<path d="M840.7 452.5 h5.8 l-2.9 -3.0 z" fill="#d0d0d0"/>
<path d="M840.7 455.7 h5.8 l-2.9 3.0 z" fill="#d0d0d0"/>
<path d="M812 478.4 H816 M836 478.6 H840 M838 476.6 V480.6" stroke="#ddd" stroke-width="1.2"/>
<path d="M908 149.4 H920 M908 159.2 H920" stroke="#e0e0e0" stroke-width="1.1"/><circle cx="915" cy="149.4" r="1.9" fill="#f0f0f0"/><circle cx="919.8" cy="159.2" r="1.8" fill="#444" stroke="#e0e0e0" stroke-width="1"/>
</svg>
<div class="a" style="left:0;top:481px;width:920px;height:24px;background:#363636;border-top:1.5px solid #2c2c2c"></div>
<div class="a" style="left:587px;top:479.5px;width:333px;height:2px;background:linear-gradient(#4a4a4a,#686868 60%,#4a4a4a)"></div>
<div class="t" style="left:0px;top:492px;font-size:10.35px;color:#e4e4e4">文字 | 字符: 0 | 字体类型: Type0 | 字体未嵌入</div>
<div class="t" style="left:805.4px;top:477.4px;font-size:16.5px;line-height:20px;height:20px;font-weight:400;font-style:italic;color:#fff;letter-spacing:0.85px;-webkit-text-stroke:0.4px #fff;transform:scaleX(1.04);transform-origin:0 0">www.4MF.net</div>
</body>
</html>
